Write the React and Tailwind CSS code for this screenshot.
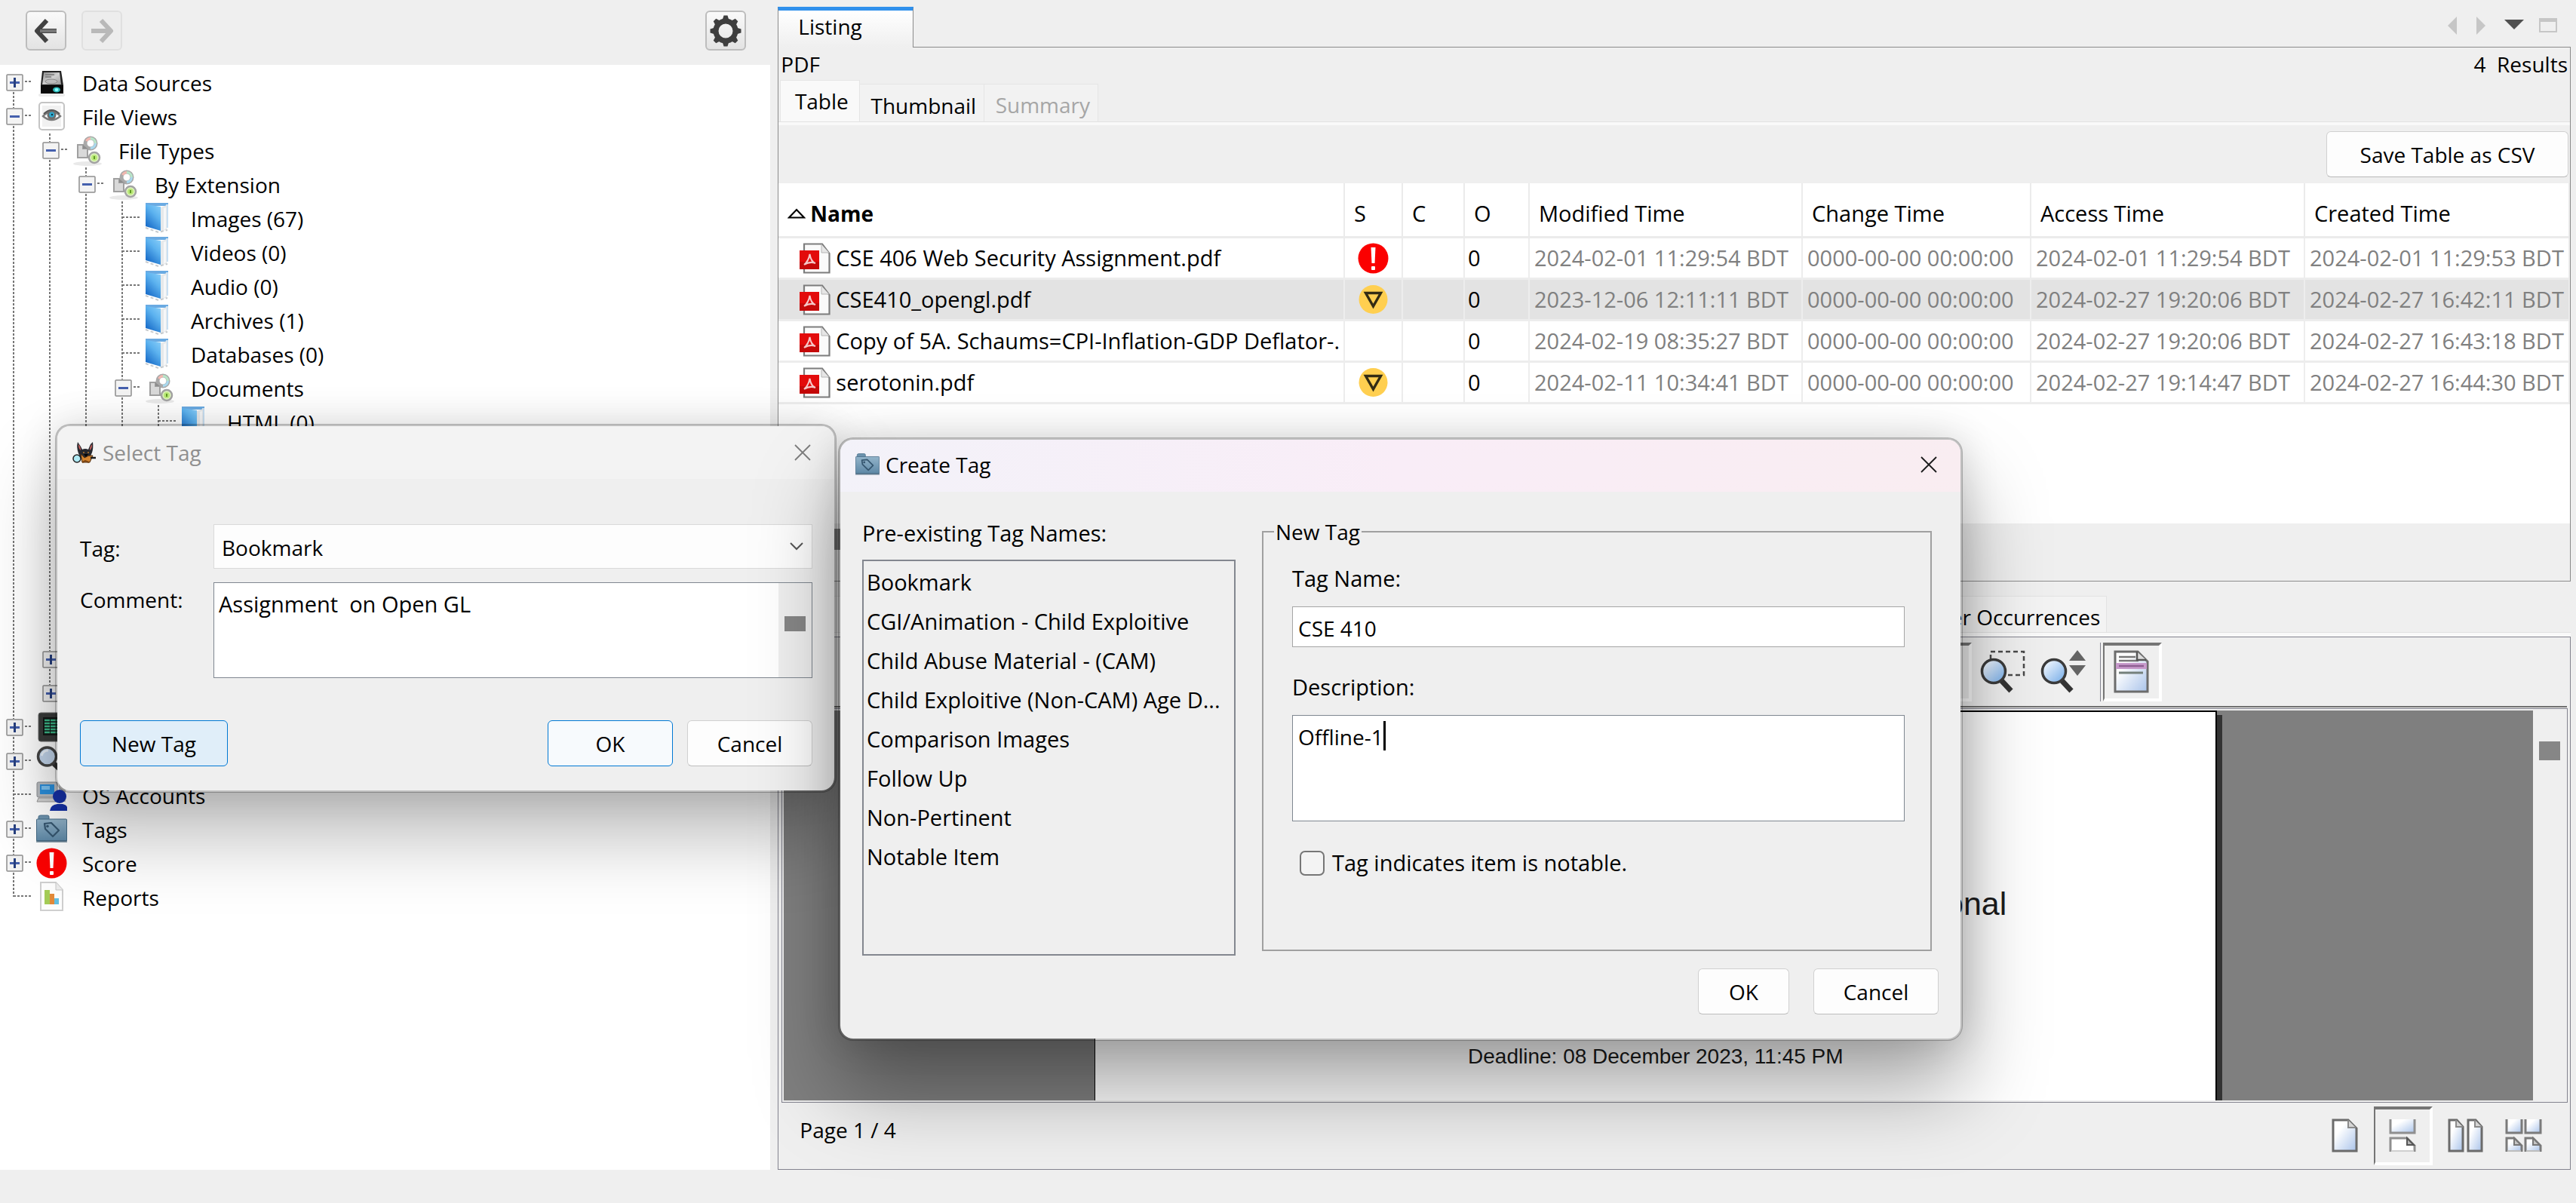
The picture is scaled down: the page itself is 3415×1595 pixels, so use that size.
import React from "react";

/* ---------- icons ---------- */

function ArrowIcon({ flip, dim }) {
  return (
    <svg viewBox="0 0 32 34" className={flip ? "h-[34px] w-8 -scale-x-100" : "h-[34px] w-8"} aria-hidden="true">
      <path d="M17 3 L4 17 L17 31 M5 17 H30" fill="none" stroke={dim ? "#b9b9b9" : "#424242"} strokeWidth="6" strokeLinejoin="round" strokeLinecap="butt" />
      {!dim && <path d="M8 17 H30" stroke="#777" strokeWidth="4" />}
    </svg>
  );
}

function GearIcon() {
  return (
    <svg viewBox="0 0 44 44" className="size-11" aria-hidden="true">
      <g fill="#3e3e3e">
        {[0, 45, 90, 135, 180, 225, 270, 315].map((a) => (
          <path key={a} d="M17.5 8 L19.5 1.5 H24.5 L26.5 8 Z" transform={`rotate(${a} 22 22)`} />
        ))}
      </g>
      <circle cx="22" cy="22" r="13" fill="none" stroke="#3e3e3e" strokeWidth="7" />
    </svg>
  );
}

function DriveIcon() {
  return (
    <svg viewBox="0 0 41 41" className="size-[41px]" aria-hidden="true">
      <defs>
        <linearGradient id="drive" x1="0" y1="0" x2="1" y2="1">
          <stop offset="0" stopColor="#8d8d8d" />
          <stop offset=".5" stopColor="#cfcfcf" />
          <stop offset="1" stopColor="#9a9a9a" />
        </linearGradient>
      </defs>
      <rect x="3" y="35" width="35" height="4" rx="2" fill="#ededed" />
      <path d="M8 5 H33 L36 24 V34 Q36 35 35 35 H7 Q6 35 6 34 V24 Z" fill="#222" />
      <path d="M10 7 H31 L33 23 H8 Z" fill="url(#drive)" />
      <path d="M12 10 H24 M12 13 H20" stroke="#777" strokeWidth="1.5" />
      <ellipse cx="20" cy="19" rx="8" ry="3" fill="#bdbdbd" stroke="#888" />
      <rect x="6" y="24" width="30" height="11" fill="#0a0a0a" />
      <ellipse cx="27" cy="30" rx="5" ry="3.5" fill="#2cb5b5" />
      <ellipse cx="27" cy="30" rx="2.5" ry="2" fill="#8ff" />
    </svg>
  );
}

function EyeIcon() {
  return (
    <svg viewBox="0 0 41 41" className="size-[41px]" aria-hidden="true">
      <rect x="4" y="2" width="33" height="36" rx="4" fill="#fff" stroke="#c4c4c4" strokeWidth="2" />
      <rect x="8" y="6" width="25" height="28" fill="#f1f1f1" />
      <path d="M9 20 Q20.5 8 32 20 Q20.5 30 9 20 Z" fill="#fff" stroke="#7b7b7b" strokeWidth="2.5" />
      <circle cx="20.5" cy="18.5" r="6" fill="#6d6d6d" />
      <circle cx="20.5" cy="18" r="3.5" fill="#2fa9cf" />
      <circle cx="21" cy="18" r="1.2" fill="#0c3340" />
      <path d="M10 17 Q20.5 7 31 17" fill="none" stroke="#555" strokeWidth="2" />
    </svg>
  );
}

function TypesIcon() {
  return (
    <svg viewBox="0 0 41 41" className="size-[41px]" aria-hidden="true">
      <ellipse cx="20" cy="38" rx="19" ry="3" fill="#e9e9e9" />
      <circle cx="24" cy="11" r="7" fill="none" stroke="#a9a9a9" strokeWidth="5" />
      <path d="M18.5 8 A6.5 6.5 0 0 1 24 4.5" fill="none" stroke="#f3b8b0" strokeWidth="3" />
      <path d="M24 4.5 A6.5 6.5 0 0 1 30.5 11" fill="none" stroke="#b8e6c9" strokeWidth="3" />
      <path d="M30.5 11 A6.5 6.5 0 0 1 24 17.5" fill="none" stroke="#a9d8ee" strokeWidth="3" />
      <path d="M7 13 H14 V18 H20 V30 H7 Z" fill="#d9d9d9" stroke="#a0a0a0" strokeWidth="2" />
      <path d="M14 13 L20 18 H14 Z" fill="#8d8d8d" />
      <circle cx="29" cy="30" r="7" fill="#dff5bd" stroke="#a3a3a3" strokeWidth="2.5" />
      <circle cx="29" cy="30" r="4" fill="#b9e878" />
      <path d="M29 28 V32" stroke="#5f9a22" strokeWidth="2" />
    </svg>
  );
}

function FolderIcon() {
  return (
    <svg viewBox="0 0 41 41" className="size-[41px]" aria-hidden="true">
      <defs>
        <linearGradient id="folder" x1="1" y1="0" x2="0.4" y2="1">
          <stop offset="0" stopColor="#8bd0fa" />
          <stop offset=".45" stopColor="#5cb2ef" />
          <stop offset="1" stopColor="#1c70cb" />
        </linearGradient>
      </defs>
      <path d="M1 0 H31 V4 H1 Z" fill="#6aaae2" />
      <path d="M28 2 H31 V33 H28 Z" fill="#c9e0f3" />
      <path d="M21 6 L29 3 V35 L21 39 Z" fill="#e6e9eb" />
      <path d="M25 7 L28 6 V34 L25 36 Z" fill="#f6f7f8" />
      <path d="M1 2 L21 5 V37 L1 31 Z" fill="url(#folder)" />
      <path d="M1 33 L18 39 L30 36" fill="none" stroke="#c6cacd" strokeWidth="2" strokeDasharray="4 3" />
    </svg>
  );
}

function TerminalIcon() {
  return (
    <svg viewBox="0 0 41 41" className="size-[41px]" aria-hidden="true">
      <rect x="3" y="1" width="36" height="38" rx="3" fill="#3a3c3b" stroke="#6d6d6d" />
      <rect x="9" y="7" width="26" height="24" fill="#151a18" />
      <path d="M11 11 H32 M11 15 H30 M11 19 H32 M11 23 H28 M11 27 H30" stroke="#3dbb8a" strokeWidth="2.5" strokeDasharray="7 1" />
    </svg>
  );
}

function LensIcon() {
  return (
    <svg viewBox="0 0 41 41" className="size-[41px]" aria-hidden="true">
      <path d="M24 24 L38 37" stroke="#333" strokeWidth="7" strokeLinecap="round" />
      <circle cx="14.5" cy="14" r="12" fill="#c4d7ee" stroke="#454545" strokeWidth="3.5" />
      <path d="M7 13 Q9 6 16 6" fill="none" stroke="#eaf2fb" strokeWidth="3" />
    </svg>
  );
}

function AccountsIcon() {
  return (
    <svg viewBox="0 0 41 41" className="size-[41px]" aria-hidden="true">
      <rect x="1" y="3" width="27" height="20" rx="2" fill="#b9bcc0" stroke="#8b8e92" />
      <rect x="5" y="6" width="19" height="13" fill="#2b8fdc" />
      <rect x="7" y="8" width="11" height="5" fill="#7cc3f2" />
      <path d="M3 24 H24 L26 29 H1 Z" fill="#d2d2d2" stroke="#999" />
      <rect x="30" y="5" width="9" height="24" fill="#c6c6c6" />
      <circle cx="31" cy="22" r="9" fill="#1531a8" />
      <path d="M18 41 Q19 33 28 32 H35 Q40 33 41 36 V41 Z" fill="#1531a8" />
    </svg>
  );
}

function TagFolderIcon({ small }) {
  return (
    <svg viewBox="0 0 41 41" className={small ? "size-8" : "size-[41px]"} aria-hidden="true">
      <defs>
        <linearGradient id="tagfolder" x1="0" y1="0" x2="0" y2="1">
          <stop offset="0" stopColor="#93b4ca" />
          <stop offset="1" stopColor="#5d87a5" />
        </linearGradient>
      </defs>
      <path d="M3 8 V4 Q3 2 6 2 H15 Q17 2 17 4 V8 Z" fill="#6d93ae" stroke="#4c728d" />
      <rect x="0.5" y="7" width="40" height="29" rx="1" fill="url(#tagfolder)" stroke="#456b86" />
      <rect x="0" y="35" width="41" height="3" fill="#3f5f75" opacity=".6" />
      <path d="M11 13 L12 20 L22 30 L30 22 L20 12 Z" fill="none" stroke="#35566f" strokeWidth="2.2" strokeLinejoin="round" />
      <circle cx="15" cy="16.5" r="1.8" fill="#35566f" />
    </svg>
  );
}

function AlertIcon() {
  return (
    <svg viewBox="0 0 41 41" className="size-[41px]" aria-hidden="true">
      <circle cx="20.5" cy="20.5" r="20" fill="#fb0000" />
      <path d="M17.5 6 H23.5 L22.5 27 H18.5 Z" fill="#fff" />
      <rect x="18" y="31" width="5" height="5" rx="1" fill="#fff" />
    </svg>
  );
}

function WarnIcon() {
  return (
    <svg viewBox="0 0 41 41" className="size-[41px]" aria-hidden="true">
      <circle cx="20.5" cy="20" r="19" fill="#ffcf50" />
      <path d="M10.5 11.5 H30.500 L20.500 29 Z" fill="none" stroke="#332c14" strokeWidth="3.4" />
    </svg>
  );
}

function ReportIcon() {
  return (
    <svg viewBox="0 0 41 41" className="size-[41px]" aria-hidden="true">
      <path d="M6 1 H26 L35 11 V38 H6 Z" fill="#fdfdfd" stroke="#cfcfcf" strokeWidth="2" />
      <path d="M26 1 V11 H35" fill="#ececec" stroke="#c5c5c5" />
      <rect x="11" y="11" width="7" height="19" fill="#a4cc57" />
      <rect x="18" y="16" width="6" height="14" fill="#e38a3a" />
      <rect x="24" y="22" width="6" height="8" fill="#63bfe2" />
    </svg>
  );
}

function PdfIcon() {
  return (
    <svg viewBox="0 0 41 41" className="size-[41px] shrink-0" aria-hidden="true">
      <path d="M6 1.500 H30 L39.500 14 V39.500 H6 Z" fill="#fafafa" stroke="#7d7d7d" strokeWidth="2.2" />
      <path d="M29 2 V13 H39" fill="#e6e6e6" stroke="#b5b5b5" />
      <rect x="0" y="10" width="26" height="25" fill="#e30b0b" />
      <rect x="0" y="25" width="26" height="10" fill="#b00808" opacity=".6" />
      <path d="M6 29 Q12 24 13.500 15 Q15 25 21 27 Q14 24 6 29" fill="none" stroke="#f6c8c8" strokeWidth="2" />
    </svg>
  );
}

function DogIcon() {
  return (
    <svg viewBox="0 0 32 32" className="size-8" aria-hidden="true">
      <path d="M7 2 L11 8 L13 12 Q17 10 21 12 L24 5 L27 2 Q28 10 26 16 L22 25 H12 L8 17 Q5 9 7 2 Z" fill="#26282e" />
      <path d="M8 5 Q11 8 11 13 Q8 11 8 5 M26 5 Q23 8 23 13 Q26 11 26 5" fill="#d2615c" />
      <path d="M11 18 Q14 20 16 23 Q21 19 27 20 L23 29 H13 Z" fill="#d4842f" stroke="#4d2d10" />
      <path d="M15 18 H21 L18 22 Z" fill="#050505" />
      <path d="M14 16 H16 M20 16 H22" stroke="#b8792f" strokeWidth="1.5" />
      <path d="M13 29 L17 27 L22 29" fill="none" stroke="#7a4312" strokeWidth="2" />
      <path d="M24 23 H31" stroke="#1c1c1c" strokeWidth="2.5" />
      <circle cx="6" cy="24" r="5" fill="#aee9f4" stroke="#222" strokeWidth="1.5" />
    </svg>
  );
}

function CloseIcon({ color }) {
  return (
    <svg viewBox="0 0 22 22" className="size-[22px]" aria-hidden="true">
      <path d="M1 1 L21 21 M21 1 L1 21" stroke={color} strokeWidth="1.8" />
    </svg>
  );
}

function PageGradient() {
  return (
    <svg className="absolute size-0" aria-hidden="true">
      <defs>
        <linearGradient id="sheet" x1="0" y1="0" x2="1" y2="1">
          <stop offset="0.3" stopColor="#ffffff" />
          <stop offset="1" stopColor="#a9c3ea" />
        </linearGradient>
        <linearGradient id="glass" x1="0" y1="0" x2="1" y2="1">
          <stop offset="0.1" stopColor="#f4f9ff" />
          <stop offset="1" stopColor="#6fa8e6" />
        </linearGradient>
      </defs>
    </svg>
  );
}

function ZoomMarqueeIcon() {
  return (
    <svg viewBox="0 0 64 60" className="h-[60px] w-16" aria-hidden="true">
      <rect x="15" y="3" width="44" height="31" fill="none" stroke="#4a4a4a" strokeWidth="2.5" strokeDasharray="6 4" />
      <path d="M29 41 L42 55" stroke="#333" strokeWidth="7" />
      <circle cx="19" cy="29" r="15.5" fill="url(#glass)" stroke="#3b3b3b" strokeWidth="3.5" />
    </svg>
  );
}

function ZoomDynamicIcon() {
  return (
    <svg viewBox="0 0 64 60" className="h-[60px] w-16" aria-hidden="true">
      <path d="M29 41 L42 55" stroke="#333" strokeWidth="7" />
      <circle cx="19" cy="29" r="15.5" fill="url(#glass)" stroke="#3b3b3b" strokeWidth="3.5" />
      <path d="M39 15 L50 1 L61 15 Z M39 21 H61 L50 35 Z" fill="#646464" />
    </svg>
  );
}

function NotesPageIcon() {
  return (
    <svg viewBox="0 0 50 60" className="h-[60px] w-[50px]" aria-hidden="true">
      <path d="M3 3 H33 L46 16 V56 H3 Z" fill="url(#sheet)" stroke="#6c6c6c" strokeWidth="3" />
      <rect x="4" y="18" width="41" height="8" fill="#c79acb" />
      <path d="M8 10 H30 M8 15 H34" stroke="#777" strokeWidth="2.5" />
      <path d="M8 22 H41" stroke="#8e5f93" strokeWidth="2.5" />
      <path d="M8 31 H40" stroke="#74807c" strokeWidth="3" />
      <path d="M32 3 V14 H44" fill="#ddd" stroke="#555" strokeWidth="2.5" />
    </svg>
  );
}

function SinglePageIcon() {
  return (
    <svg viewBox="0 0 36 46" className="h-[46px] w-9" aria-hidden="true">
      <path d="M2 2 H22 L33 13 V43 H2 Z" fill="url(#sheet)" stroke="#6b6b6b" strokeWidth="3" />
      <path d="M22 2 V12 H32" fill="#d5d5d5" stroke="#8b8b8b" strokeWidth="2" />
    </svg>
  );
}

function ContinuousIcon() {
  return (
    <svg viewBox="0 0 36 46" className="h-[46px] w-9" aria-hidden="true">
      <path d="M2 1 V19 H34 V1" fill="url(#sheet)" stroke="#8f8f8f" strokeWidth="3" />
      <path d="M24 26 L34 36 V43 H2 V26 Z" fill="#fff" />
      <path d="M2 44 V26 H24 L34 36 V44" fill="none" stroke="#8f8f8f" strokeWidth="3" />
      <path d="M3 43 H33" stroke="#cfcfcf" strokeWidth="2" />
      <path d="M24 26 V35 H33 Z" fill="#b5b5b5" stroke="#555" strokeWidth="2" />
    </svg>
  );
}

function FacingIcon() {
  return (
    <svg viewBox="0 0 48 46" className="h-[46px] w-12" aria-hidden="true">
      {[0, 25].map((x) => (
        <g key={x} transform={`translate(${x} 0)`}>
          <path d="M2 2 H12 L20 11 V43 H2 Z" fill="url(#sheet)" stroke="#6b6b6b" strokeWidth="3" />
          <path d="M11 2 V11 H20" fill="#d5d5d5" stroke="#8b8b8b" strokeWidth="2" />
        </g>
      ))}
    </svg>
  );
}

function ContinuousFacingIcon() {
  return (
    <svg viewBox="0 0 50 46" className="h-[46px] w-[50px]" aria-hidden="true">
      {[0, 25].map((x) => (
        <g key={x} transform={`translate(${x} 0)`}>
          <path d="M2 1 V19 H22 V1" fill="url(#sheet)" stroke="#7b7b7b" strokeWidth="3" />
          <path d="M12 26 L22 36 V43 H2 V26 Z" fill="url(#sheet)" />
          <path d="M2 44 V26 H12 L22 36 V44" fill="none" stroke="#7b7b7b" strokeWidth="3" />
          <path d="M3 43 H21" stroke="#bdbdbd" strokeWidth="2" />
          <path d="M12 26 V35 H21 Z" fill="#c5c5c5" stroke="#777" strokeWidth="2" />
        </g>
      ))}
    </svg>
  );
}

/* ---------- tree ---------- */

function Guide({ up, down, across }) {
  return (
    <svg viewBox="0 0 48 45" className="h-[45px] w-12 shrink-0" aria-hidden="true">
      <g stroke="#777" strokeWidth="2" strokeDasharray="3 2">
        {up && <path d="M18 0 V22" />}
        {down && <path d="M18 20 V45" />}
        {across && <path d="M18 21 H42" />}
      </g>
    </svg>
  );
}

function Expander({ open, up, down, label }) {
  return (
    <button type="button" aria-label={`${open ? "Collapse" : "Expand"} ${label}`} aria-expanded={open} className="h-[45px] w-12 shrink-0">
      <svg viewBox="0 0 48 45" className="h-[45px] w-12" aria-hidden="true">
        <g stroke="#777" strokeWidth="2" strokeDasharray="3 2">
          {up && <path d="M18 0 V11" />}
          {down && <path d="M18 35 V45" />}
          <path d="M33 21 H42" />
        </g>
        <rect x="9" y="12" width="21" height="21" rx="1" fill="#f3f3f3" stroke="#8f8f8f" strokeWidth="1.5" />
        <path d="M13 22.500 H26" stroke="#4560ad" strokeWidth="3" />
        {!open && <path d="M19.500 16 V29" stroke="#27407f" strokeWidth="3" />}
      </svg>
    </button>
  );
}

// guides: one flag per ancestor level; node: "open" | "closed" | "leaf"
const TREE = [
  { label: "Data Sources", Icon: DriveIcon, guides: [], node: "closed", down: true },
  { label: "File Views", Icon: EyeIcon, guides: [], node: "open", up: true, down: true },
  { label: "File Types", Icon: TypesIcon, guides: [1], node: "open", up: true, down: true },
  { label: "By Extension", Icon: TypesIcon, guides: [1, 1], node: "open", up: true, down: true },
  { label: "Images (67)", Icon: FolderIcon, guides: [1, 1, 1], node: "leaf", up: true, down: true },
  { label: "Videos (0)", Icon: FolderIcon, guides: [1, 1, 1], node: "leaf", up: true, down: true },
  { label: "Audio (0)", Icon: FolderIcon, guides: [1, 1, 1], node: "leaf", up: true, down: true },
  { label: "Archives (1)", Icon: FolderIcon, guides: [1, 1, 1], node: "leaf", up: true, down: true },
  { label: "Databases (0)", Icon: FolderIcon, guides: [1, 1, 1], node: "leaf", up: true, down: true },
  { label: "Documents", Icon: TypesIcon, guides: [1, 1, 1], node: "open", up: true, down: true },
  { label: "HTML (0)", Icon: FolderIcon, guides: [1, 1, 1, 1], node: "leaf", up: true, down: true },
  { guides: [1, 1, 1, 1] },
  { guides: [1, 1, 1, 1] },
  { guides: [1, 1, 1, 1] },
  { guides: [1, 1, 1, 1] },
  { guides: [1, 1, 1] },
  { guides: [1, 1, 1] },
  { label: "", guides: [1], node: "closed", up: true, down: true },
  { label: "", guides: [1], node: "closed", up: true },
  { label: "", Icon: TerminalIcon, guides: [], node: "closed", up: true, down: true },
  { label: "", Icon: LensIcon, guides: [], node: "closed", up: true, down: true },
  { label: "OS Accounts", Icon: AccountsIcon, guides: [], node: "leaf", up: true, down: true },
  { label: "Tags", Icon: TagFolderIcon, guides: [], node: "closed", up: true, down: true },
  { label: "Score", Icon: AlertIcon, guides: [], node: "closed", up: true, down: true },
  { label: "Reports", Icon: ReportIcon, guides: [], node: "leaf", up: true },
];

function TreeRow({ row }) {
  const { label, Icon, guides, node, up, down } = row;
  return (
    <li className="flex h-[45px] items-center">
      {guides.map((_, i) => (
        <Guide key={i} up down />
      ))}
      {node === "leaf" && <Guide up={up} down={down} across />}
      {(node === "open" || node === "closed") && <Expander open={node === "open"} up={up} down={down} label={label || "node"} />}
      {Icon && <Icon />}
      {label && <span className="ml-5 whitespace-nowrap">{label}</span>}
    </li>
  );
}

/* ---------- listing ---------- */

const ROWS = [
  ["CSE 406 Web Security Assignment.pdf", "alert", "2024-02-01 11:29:54 BDT", "2024-02-01 11:29:54 BDT", "2024-02-01 11:29:53 BDT"],
  ["CSE410_opengl.pdf", "warn", "2023-12-06 12:11:11 BDT", "2024-02-27 19:20:06 BDT", "2024-02-27 16:42:11 BDT"],
  ["Copy of 5A. Schaums=CPI-Inflation-GDP Deflator-.", "", "2024-02-19 08:35:27 BDT", "2024-02-27 19:20:06 BDT", "2024-02-27 16:43:18 BDT"],
  ["serotonin.pdf", "warn", "2024-02-11 10:34:41 BDT", "2024-02-27 19:14:47 BDT", "2024-02-27 16:44:30 BDT"],
];

const HEAD = "h-[73px] overflow-hidden border-r-2 border-b-3 border-[#ebebeb] px-3 pt-2.5 text-left whitespace-nowrap";
const CELL = "h-[55px] overflow-hidden border-r-2 border-b-3 border-[#ededed] whitespace-nowrap";

function FileTable() {
  return (
    <table className="w-full table-fixed border-separate border-spacing-0 bg-white text-[29px]">
      <colgroup>
        <col />
        <col className="w-[77px]" />
        <col className="w-[82px]" />
        <col className="w-[86px]" />
        <col className="w-[362px]" />
        <col className="w-[303px]" />
        <col className="w-[363px]" />
        <col className="w-[351px]" />
      </colgroup>
      <thead>
        <tr>
          <th className={HEAD + " font-bold"}>
            <span className="flex items-center gap-1.5 text-[28px]">
              <svg viewBox="0 0 24 14" className="h-3.5 w-6" aria-hidden="true">
                <path d="M2 12.500 L12 2 L22 12.500 Z" fill="none" stroke="#000" strokeWidth="2.2" />
              </svg>
              <span>Name</span>
            </span>
          </th>
          <th className={HEAD + " font-normal"}>S</th>
          <th className={HEAD + " font-normal"}>C</th>
          <th className={HEAD + " font-normal"}>O</th>
          <th className={HEAD + " font-normal"}>Modified Time</th>
          <th className={HEAD + " font-normal"}>Change Time</th>
          <th className={HEAD + " font-normal"}>Access Time</th>
          <th className={HEAD + " font-normal"}>Created Time</th>
        </tr>
      </thead>
      <tbody>
        {ROWS.map(([name, score, modified, access, created], i) => (
          <tr key={name} className={i === 1 ? "bg-[#e3e3e3]" : ""}>
            <td className={CELL + " pl-7"}>
              <span className="flex items-center gap-[7px]">
                <PdfIcon />
                <span>{name}</span>
              </span>
            </td>
            <td className={CELL}>
              <span className="flex justify-center">
                {score === "alert" && <AlertIcon />}
                {score === "warn" && <WarnIcon />}
              </span>
            </td>
            <td className={CELL} />
            <td className={CELL + " pl-1"}>0</td>
            <td className={CELL + " pl-1.5 text-[#808080]"}>{modified}</td>
            <td className={CELL + " pl-1.5 text-[#808080]"}>0000-00-00 00:00:00</td>
            <td className={CELL + " pl-1.5 text-[#808080]"}>{access}</td>
            <td className={CELL + " pl-1.5 text-[#808080]"}>{created}</td>
          </tr>
        ))}
      </tbody>
    </table>
  );
}

function Listing() {
  return (
    <section className="flex min-h-[771px] flex-col">
      <div className="flex h-[63px]">
        <button type="button" className="mt-[9px] w-[180px] border-x border-t-[5px] border-x-[#8b8b8b] border-t-[#2f90ec] bg-linear-to-b from-white to-[#efefef] pb-2 pl-[26px] text-left">
          Listing
        </button>
        <div className="flex flex-1 items-start justify-end gap-6 border-b border-[#8b8b8b] pt-5 pr-[18px]">
          <button type="button" aria-label="Scroll tabs left" className="h-7">
            <svg viewBox="0 0 14 28" className="h-7 w-3.5"><path d="M13 2 V26 L1 14 Z" fill="#c6c6c6" /></svg>
          </button>
          <button type="button" aria-label="Scroll tabs right" className="h-7">
            <svg viewBox="0 0 14 28" className="h-7 w-3.5"><path d="M1 2 V26 L13 14 Z" fill="#c6c6c6" /></svg>
          </button>
          <button type="button" aria-label="Show tab list" className="h-7">
            <svg viewBox="0 0 26 28" className="h-7 w-[26px]"><path d="M0 6 H26 L13 19 Z" fill="#505050" /></svg>
          </button>
          <button type="button" aria-label="Maximize" className="-ml-1 h-7">
            <svg viewBox="0 0 24 28" className="h-7 w-6"><path d="M1 5 H23 V22 H1 Z" fill="none" stroke="#c6c6c6" strokeWidth="2" /><rect y="4" width="24" height="5" fill="#c6c6c6" /></svg>
          </button>
        </div>
      </div>
      <div className="flex flex-1 flex-col border-x border-b border-[#8b8b8b]">
        <div className="flex h-[43px] items-center justify-between px-[3px] whitespace-pre">
          <span>PDF</span>
          <span>4  Results</span>
        </div>
        <div role="tablist" className="flex h-[55px] items-end px-0.5">
          <button type="button" role="tab" aria-selected="true" className="h-full w-[106px] border border-b-0 border-[#e5e5e5] bg-[#f9f9f9] pl-1 text-center">Table</button>
          <button type="button" role="tab" aria-selected="false" className="h-[50px] w-[165px] border-t border-r border-[#e5e5e5] bg-[#f2f2f2] pt-1.5 pl-1">Thumbnail</button>
          <button type="button" role="tab" aria-selected="false" disabled className="h-[50px] w-[151px] border-t border-r border-[#e5e5e5] bg-[#f2f2f2] pt-1 pl-1 text-[#a6a6a6]">Summary</button>
        </div>
        <div className="h-[5px] border-t border-[#e2e2e2] bg-[#f9f9f9]" />
        <div className="flex h-[77px] justify-end pt-2 pr-0.5">
          <button type="button" className="h-[61px] w-[321px] rounded-md border border-[#d0d0d0] border-b-[#b8b8b8] bg-[#fdfdfd]">Save Table as CSV</button>
        </div>
        <div className="flex-1 bg-white">
          <FileTable />
        </div>
        <div className="h-[76px] pt-[7px] pl-3">
          <div className="h-7 w-[1200px] bg-[#858585]" />
        </div>
      </div>
    </section>
  );
}

/* ---------- document viewer ---------- */

const SUNKEN = "flex h-[78px] w-[78px] items-center justify-center border-t-4 border-l-2 border-r-4 border-b-4 border-t-[#757575] border-l-[#757575] border-r-white border-b-white";

function Viewer() {
  return (
    <section className="flex flex-1 flex-col pt-[19px]">
      <div className="flex h-12">
        <button type="button" role="tab" aria-selected="false" className="w-[1762px] border border-b-0 border-[#e3e3e3] bg-[#f3f3f3] pt-1.5 pr-2 text-right">Other Occurrences</button>
      </div>
      <div className="h-1.5 border-t border-[#e2e2e2] bg-[#f9f9f9]" />
      <div className="flex flex-1 flex-col border border-[#83838f]">
        <div className="flex h-[91px] items-center pl-[1504px]">
          <button type="button" aria-label="Fit width" className={SUNKEN}>
            <svg viewBox="0 0 50 60" className="h-[60px] w-[50px]"><path d="M26 28 L50 36 M26 46 L50 54" stroke="#b0b0b0" strokeWidth="5" /></svg>
          </button>
          <button type="button" aria-label="Zoom marquee" className="ml-2.5"><ZoomMarqueeIcon /></button>
          <button type="button" aria-label="Zoom dynamic" className="ml-4"><ZoomDynamicIcon /></button>
          <div className="ml-4 h-[78px] w-1 border-l border-[#83838f]" />
          <button type="button" aria-label="Annotations" className={SUNKEN}><NotesPageIcon /></button>
        </div>
        <div className="mr-1 h-0.5 bg-[#707070]" />
        <div className="mt-px mr-[3px] ml-1 flex h-[523px] flex-1 border border-[#83838f]">
          <div className="m-0.5 mr-0 flex flex-1 bg-[#7f7f7f]">
            <div className="ml-[412px] flex w-[1488px] flex-col items-center border-t-2 border-r-2 border-l border-black bg-white font-['Liberation_Sans',sans-serif] text-[#1c1c1c]">
              <p className="mt-[229px] w-full pr-[277px] text-right text-[43px] leading-[50px]">Computer Graphics Sessional</p>
              <p className="mt-[159px] text-[28px] leading-[38px]">Deadline: 08 December 2023, 11:45 PM</p>
            </div>
            <div className="mt-1.5 w-[7px] bg-[#333]" />
          </div>
          <div className="w-[45px] shrink-0 pt-[43px] pl-2">
            <div className="h-[25px] w-7 bg-[#868686]" />
          </div>
        </div>
        <div className="flex h-[88px] items-center pr-9 pl-7">
          <span className="-mt-4">Page 1 / 4</span>
          <div className="ml-auto flex items-center">
            <button type="button" aria-label="Single page"><SinglePageIcon /></button>
            <button type="button" aria-label="Continuous" className={SUNKEN + " ml-5"}><ContinuousIcon /></button>
            <button type="button" aria-label="Facing pages" className="ml-5"><FacingIcon /></button>
            <button type="button" aria-label="Continuous facing pages" className="ml-7"><ContinuousFacingIcon /></button>
          </div>
        </div>
      </div>
    </section>
  );
}

/* ---------- dialogs ---------- */

const BTN = "h-[61px] rounded-md border";
const BTN_PLAIN = BTN + " border-[#d0d0d0] border-b-[#bdbdbd] bg-[#fdfdfd]";

function SelectTagDialog() {
  return (
    <div role="dialog" aria-label="Select Tag" className="absolute top-[562px] left-[73px] w-[1036px] rounded-[20px] border-3 border-black/25 bg-[#efefef] bg-clip-padding shadow-[0_56px_100px_rgba(0,0,0,0.28),0_0_50px_rgba(0,0,0,0.12)]">
      <div className="flex h-[70px] items-center rounded-t-[17px] bg-[#f3f3f3] pr-[31px] pl-5">
        <DogIcon />
        <span className="ml-2 text-[#8f8f8f]">Select Tag</span>
        <button type="button" aria-label="Close Select Tag" className="ml-auto"><CloseIcon color="#7d7d7d" /></button>
      </div>
      <div className="flex flex-col pt-[60px] pr-[29px] pb-8 pl-[30px]">
        <div className="flex items-center">
          <label htmlFor="tag" className="w-[177px] pt-1">Tag:</label>
          <div className="relative flex-1">
            <select id="tag" defaultValue="Bookmark" className="h-[59px] w-full appearance-none border border-[#dadada] bg-[#fdfdfd] pt-0.5 pl-2.5">
              <option>Bookmark</option>
              <option>Follow Up</option>
              <option>Notable Item</option>
            </select>
            <svg viewBox="0 0 18 12" className="pointer-events-none absolute top-6 right-3 h-3 w-[18px]" aria-hidden="true">
              <path d="M1 1 L9 9 L17 1" fill="none" stroke="#555" strokeWidth="2" />
            </svg>
          </div>
        </div>
        <div className="mt-[18px] flex">
          <label htmlFor="comment" className="w-[177px] pt-1">Comment:</label>
          <div className="flex h-[127px] flex-1 border border-[#7f8790] bg-white">
            <textarea id="comment" defaultValue="Assignment  on Open GL" className="flex-1 resize-none overflow-hidden px-1.5 pt-[9px] text-[29px] outline-none" />
            <div className="w-11 bg-[#efefef] pt-11 pl-2">
              <div className="h-5 w-7 bg-[#868686]" />
            </div>
          </div>
        </div>
        <div className="mt-14 flex">
          <button type="button" className={BTN + " w-[196px] border-[#0078d4] bg-[#e0eef9]"}>New Tag</button>
          <button type="button" className={BTN + " ml-auto w-[166px] border-[#0078d4] bg-[#f7fafd]"}>OK</button>
          <button type="button" className={BTN_PLAIN + " ml-[19px] w-[166px]"}>Cancel</button>
        </div>
      </div>
    </div>
  );
}

const TAG_NAMES = [
  "Bookmark",
  "CGI/Animation - Child Exploitive",
  "Child Abuse Material - (CAM)",
  "Child Exploitive (Non-CAM) Age D...",
  "Comparison Images",
  "Follow Up",
  "Non-Pertinent",
  "Notable Item",
];

function CreateTagDialog() {
  return (
    <div role="dialog" aria-label="Create Tag" className="absolute top-[580px] left-[1111px] w-[1491px] rounded-[20px] border-3 border-black/25 bg-[#efefef] bg-clip-padding shadow-[0_64px_110px_rgba(0,0,0,0.35),0_0_50px_rgba(0,0,0,0.14)]">
      <div className="flex h-[69px] items-center rounded-t-[17px] bg-linear-to-r from-[#f3f2f9] via-[#f9edf7] to-[#f9edf1] pr-[31px] pb-1 pl-5">
        <TagFolderIcon small />
        <span className="ml-2">Create Tag</span>
        <button type="button" aria-label="Close Create Tag" className="ml-auto"><CloseIcon color="#1b1b1b" /></button>
      </div>
      <div className="flex pt-[34px] pr-[38px] pl-[29px] text-[29px]">
        <div className="w-[495px]">
          <h2 className="leading-[42px]">Pre-existing Tag Names:</h2>
          <ul className="mt-[14px] h-[525px] border-2 border-[#83878f] pt-0.5 pl-1">
            {TAG_NAMES.map((t) => (
              <li key={t} className="h-[52px] leading-[52px] whitespace-nowrap">{t}</li>
            ))}
          </ul>
        </div>
        <fieldset className="ml-[35px] h-[575px] flex-1 border-2 border-[#a0a0a0] pr-[34px] pl-[38px]">
          <legend className="-ml-6 px-0.5 text-[28px] leading-[38px]">New Tag</legend>
          <label htmlFor="tagname" className="mt-6 block">Tag Name:</label>
          <input id="tagname" type="text" defaultValue="CSE 410" className="mt-[18px] block h-[54px] w-full border border-[#a5a5a5] bg-white px-[7px] pt-1 text-[28px]" />
          <label htmlFor="description" className="mt-[34px] block">Description:</label>
          <div className="relative mt-[18px]">
            <textarea id="description" defaultValue="Offline-1" className="block h-[141px] w-full resize-none overflow-hidden border border-[#7f8790] bg-white px-[7px] pt-[9px] text-[28px]" />
            <div className="absolute top-2 left-[121px] h-[39px] w-[3px] bg-black" />
          </div>
          <div className="mt-9 ml-2.5 flex items-center">
            <input id="notable" type="checkbox" className="size-[33px] appearance-none rounded-[7px] border-2 border-[#767676] bg-[#f3f3f3]" />
            <label htmlFor="notable" className="ml-2.5">Tag indicates item is notable.</label>
          </div>
        </fieldset>
      </div>
      <div className="flex justify-end gap-8 pt-[17px] pr-[29px] pb-8">
        <button type="button" className={BTN_PLAIN + " w-[121px]"}>OK</button>
        <button type="button" className={BTN_PLAIN + " w-[166px]"}>Cancel</button>
      </div>
    </div>
  );
}

/* ---------- page ---------- */

const TOOL = "flex h-[53px] w-[54px] items-center justify-center rounded-md border-2";

export default function App() {
  return (
    <div className="relative flex min-h-screen overflow-hidden bg-[#efefef] pb-11 font-['Open_Sans','Noto_Sans',sans-serif] text-[28px] leading-[38px] text-black">
      <PageGradient />
      <aside className="flex w-[30.2%] shrink-0 flex-col pr-2.5">
        <div className="flex h-[86px] gap-5 pt-3.5 pr-8 pl-[34px]">
          <button type="button" aria-label="Back" className={TOOL + " border-[#bdbdbd] bg-linear-to-b from-[#fafafa] to-[#e3e3e3]"}><ArrowIcon /></button>
          <button type="button" aria-label="Forward" disabled className={TOOL + " border-[#e0e0e0] bg-[#ededed]"}><ArrowIcon flip dim /></button>
          <button type="button" aria-label="View preferences" className={TOOL + " ml-auto border-[#bdbdbd] bg-linear-to-b from-[#fafafa] to-[#e3e3e3]"}><GearIcon /></button>
        </div>
        <ul className="flex-1 bg-white pt-px">
          {TREE.map((row, i) => (
            <TreeRow key={i} row={row} />
          ))}
        </ul>
      </aside>
      <main className="flex min-w-0 flex-1 flex-col pr-[7px]">
        <Listing />
        <Viewer />
      </main>
      <SelectTagDialog />
      <CreateTagDialog />
    </div>
  );
}
